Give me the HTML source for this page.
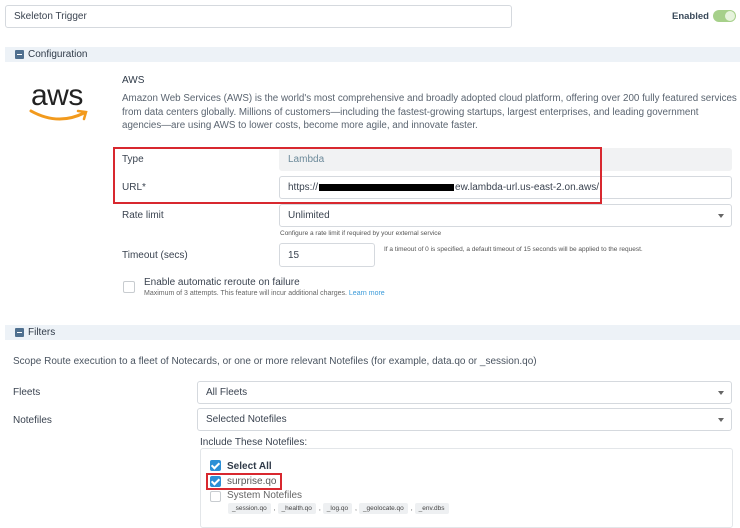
<!DOCTYPE html>
<html><head><style>
*{box-sizing:border-box;margin:0;padding:0}
body{width:740px;height:524px;overflow:hidden;background:#fff;font-family:"Liberation Sans",sans-serif;color:#3a4350;position:relative}
.a{position:absolute;white-space:nowrap}
.inp{position:absolute;border:1px solid #d5d9de;border-radius:3px;background:#fff;font-size:10px;color:#3a4350;padding-left:8px;display:flex;align-items:center}
.bar{position:absolute;left:5px;right:0;height:15px;background:#edf2f7;font-size:10px;color:#2f3a48}
.mi{position:absolute;left:10px;top:3px;width:9px;height:9px;background:#50708f;border-radius:1px}
.mi:after{content:"";position:absolute;left:2px;top:4px;width:5px;height:1px;background:#fff}
.lbl{font-size:10px;color:#3a4350}
.car{position:absolute;right:7px;top:9px;border-left:3px solid transparent;border-right:3px solid transparent;border-top:4px solid #666}
.cb{position:absolute;width:11px;height:11px;border-radius:2px}
.on{background:#2c8fd6}
.on:after{content:"";position:absolute;left:3px;top:1px;width:3px;height:6px;border:solid #fff;border-width:0 2px 2px 0;transform:rotate(45deg)}
.chip{display:inline-block;background:#eef0f2;border-radius:2px;font-size:6.5px;padding:2px 4px;color:#444;margin-right:1px}
.red{position:absolute;border-style:solid;border-width:2px;border-color:#d8282f}
</style></head><body>
<div class="inp" style="left:5px;top:5px;width:507px;height:23px">Skeleton Trigger</div>
<div class="a" style="left:672px;top:11px;font-size:9.5px;font-weight:bold;color:#3a4a5a">Enabled</div>
<div class="a" style="left:713px;top:10px;width:23px;height:12px;border-radius:6px;background:#a6d08a"><div style="position:absolute;right:1px;top:1px;width:10px;height:10px;border-radius:5px;background:#e6f3dc"></div></div>

<div class="bar" style="top:47px"><div class="mi"></div><span class="a" style="left:23px;top:2px">Configuration</span></div>

<div class="a" style="left:31px;top:79px;font-size:30px;color:#222;letter-spacing:-0.5px">aws</div>
<svg class="a" style="left:28px;top:108px" width="62" height="16" viewBox="0 0 62 16"><path d="M3 3 Q30 18 56 5" stroke="#f29a1d" stroke-width="3" fill="none" stroke-linecap="round"/><path d="M50 3 L58 4 L56 11" stroke="#f29a1d" stroke-width="2.5" fill="none" stroke-linecap="round"/></svg>
<div class="a" style="left:122px;top:75px;font-size:10px;color:#2f3a48">AWS</div>
<div class="a" style="left:122px;top:92px;font-size:9.8px;line-height:13.5px;color:#5a6470">Amazon Web Services (AWS) is the world's most comprehensive and broadly adopted cloud platform, offering over 200 fully featured services<br>from data centers globally. Millions of customers—including the fastest-growing startups, largest enterprises, and leading government<br>agencies—are using AWS to lower costs, become more agile, and innovate faster.</div>

<div class="a lbl" style="left:122px;top:154px">Type</div>
<div class="inp" style="left:279px;top:148px;width:453px;height:23px;background:#f1f2f3;border-color:#f1f2f3;color:#6c8a9a">Lambda</div>
<div class="a lbl" style="left:122px;top:182px">URL*</div>
<div class="inp" style="left:279px;top:176px;width:453px;height:23px">https://<span style="display:inline-block;width:135px;height:7px;background:#000;margin:0 1px"></span>ew.lambda-url.us-east-2.on.aws/</div>
<div class="red" style="left:113px;top:147px;width:489px;height:57px"></div>

<div class="a lbl" style="left:122px;top:210px">Rate limit</div>
<div class="inp" style="left:279px;top:204px;width:453px;height:23px">Unlimited<span class="car"></span></div>
<div class="a" style="left:280px;top:230px;font-size:6.5px;color:#555">Configure a rate limit if required by your external service</div>
<div class="a lbl" style="left:122px;top:250px">Timeout (secs)</div>
<div class="inp" style="left:279px;top:243px;width:96px;height:24px">15</div>
<div class="a" style="left:384px;top:246px;font-size:6.5px;color:#555">If a timeout of 0 is specified, a default timeout of 15 seconds will be applied to the request.</div>
<div class="cb" style="left:123px;top:281px;border:1px solid #c8ccd0;width:12px;height:12px"></div>
<div class="a lbl" style="left:144px;top:277px">Enable automatic reroute on failure</div>
<div class="a" style="left:144px;top:290px;font-size:7px;color:#666">Maximum of 3 attempts. This feature will incur additional charges. <span style="color:#3a9ad9">Learn more</span></div>

<div class="bar" style="top:325px"><div class="mi"></div><span class="a" style="left:23px;top:2px">Filters</span></div>
<div class="a lbl" style="left:13px;top:356px;color:#4a5460">Scope Route execution to a fleet of Notecards, or one or more relevant Notefiles (for example, data.qo or _session.qo)</div>

<div class="a lbl" style="left:13px;top:387px">Fleets</div>
<div class="inp" style="left:197px;top:381px;width:535px;height:23px">All Fleets<span class="car"></span></div>
<div class="a lbl" style="left:13px;top:415px">Notefiles</div>
<div class="inp" style="left:197px;top:408px;width:535px;height:23px">Selected Notefiles<span class="car"></span></div>
<div class="a lbl" style="left:200px;top:437px">Include These Notefiles:</div>
<div class="a" style="left:200px;top:448px;width:533px;height:80px;border:1px solid #e3e6e9;border-radius:3px"></div>
<div class="cb on" style="left:210px;top:460px"></div>
<div class="a" style="left:227px;top:461px;font-size:10px;font-weight:bold;color:#2f3a48">Select All</div>
<div class="cb on" style="left:210px;top:476px"></div>
<div class="a" style="left:227px;top:476px;font-size:10px;color:#555">surprise.qo</div>
<div class="red" style="left:206px;top:473px;width:76px;height:17px"></div>
<div class="cb" style="left:210px;top:491px;border:1px solid #c8ccd0"></div>
<div class="a" style="left:227px;top:490px;font-size:10px;color:#666">System Notefiles</div>
<div class="a" style="left:228px;top:503px;font-size:7px;color:#666"><span class="chip">_session.qo</span> , <span class="chip">_health.qo</span> , <span class="chip">_log.qo</span> , <span class="chip">_geolocate.qo</span> , <span class="chip">_env.dbs</span></div>
</body></html>
